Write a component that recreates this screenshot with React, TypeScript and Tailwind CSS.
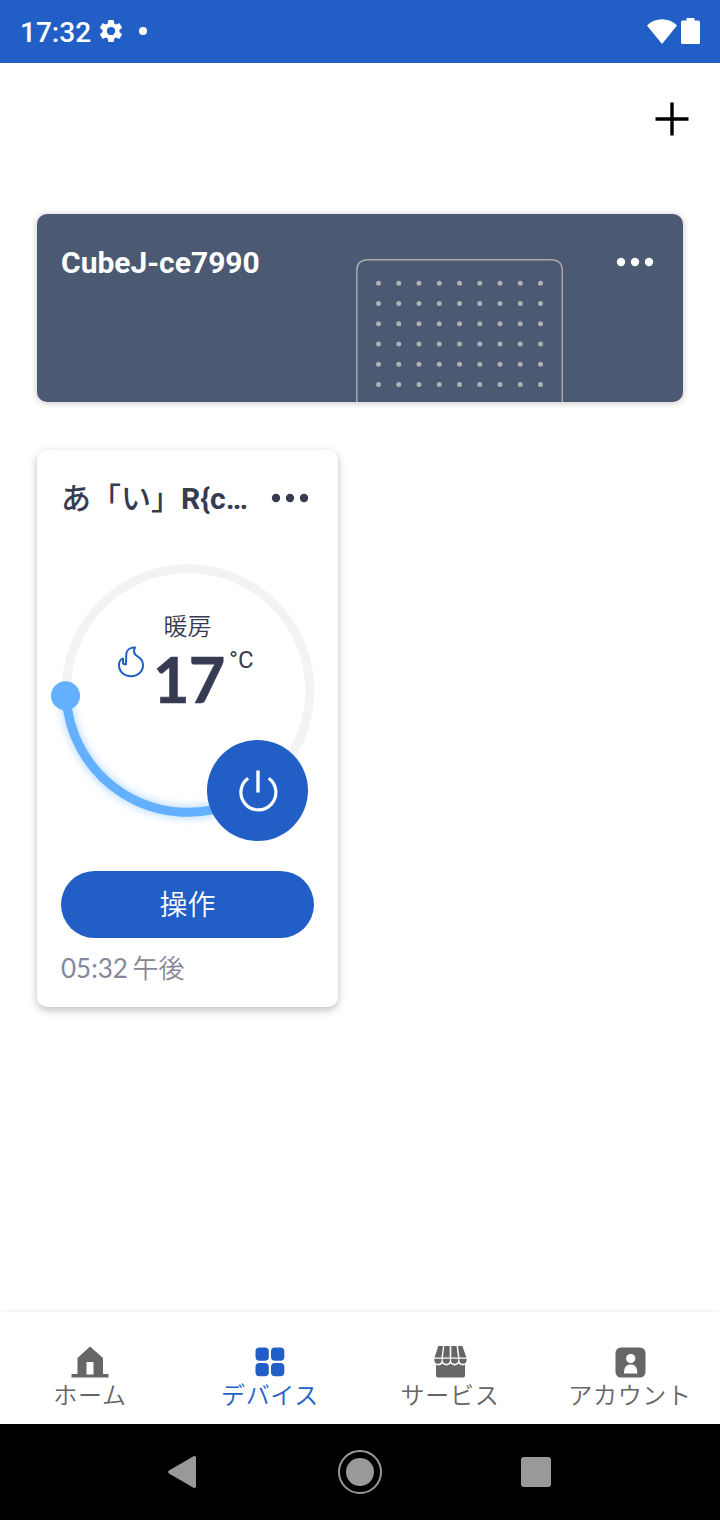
import type { ReactNode } from "react";

const FONT = "font-['Roboto','Noto_Sans_CJK_JP',sans-serif]";

function StatusBar() {
  return (
    <header className="flex h-[63px] shrink-0 items-center bg-[#215fc6] pl-[20px] pr-5 text-white">
      <span className="w-[80px] pt-px text-[28px] leading-[63px] font-medium">17:32</span>
      <svg className="h-[22px] w-[22px] mb-px" viewBox="2.3 2 19.4 20" preserveAspectRatio="none" fill="currentColor">
        <path d="M19.43 12.98c.04-.32.07-.64.07-.98s-.03-.66-.07-.98l2.11-1.65c.19-.15.24-.42.12-.64l-2-3.46c-.12-.22-.39-.3-.61-.22l-2.49 1c-.52-.4-1.08-.73-1.69-.98l-.38-2.65A.488.488 0 0 0 14 2h-4c-.25 0-.46.18-.49.42l-.38 2.65c-.61.25-1.17.59-1.69.98l-2.49-1c-.23-.09-.49 0-.61.22l-2 3.46c-.13.22-.07.49.12.64l2.11 1.65c-.04.32-.07.65-.07.98s.03.66.07.98l-2.11 1.65c-.19.15-.24.42-.12.64l2 3.46c.12.22.39.3.61.22l2.49-1c.52.4 1.08.73 1.69.98l.38 2.65c.03.24.24.42.49.42h4c.25 0 .46-.18.49-.42l.38-2.65c.61-.25 1.17-.59 1.69-.98l2.49 1c.23.09.49 0 .61-.22l2-3.46c.12-.22.07-.49-.12-.64l-2.11-1.65zM12 15.700a3.700 3.700 0 1 1 0-7.400 3.700 3.700 0 0 1 0 7.400z" />
      </svg>
      <span className="mb-px ml-[17px] size-2 rounded-full bg-white" />
      <svg className="mb-px ml-auto h-[25px] w-[30px]" viewBox="0 0 30 25" fill="currentColor">
        <path d="M15 25 0 6.500C8-2 22-2 30 6.500Z" />
      </svg>
      <svg className="mb-px ml-1 h-[26px] w-[19px]" viewBox="0 0 19 26" fill="currentColor">
        <path d="M5.500 0h8v2.500H17.500q1.500 0 1.500 1.500V24.500q0 1.500-1.500 1.500H1.500q-1.500 0-1.500-1.500V4q0-1.500 1.500-1.500h4Z" />
      </svg>
    </header>
  );
}

function MoreButton({ className }: { className: string }) {
  return (
    <button aria-label="メニュー" className={className}>
      <svg className="h-2.5 w-[38px]" viewBox="0 0 38 10" fill="currentColor">
        <circle cx="5" cy="5" r="4.200" />
        <circle cx="19" cy="5" r="4.200" />
        <circle cx="33" cy="5" r="4.200" />
      </svg>
    </button>
  );
}

const COLS = [0, 1, 2, 3, 4, 5, 6, 7, 8];
const ROWS = [0, 1, 2, 3, 4, 5];

function CubeCard() {
  return (
    <section className="flex h-[188px] items-start rounded-[10px] bg-[#4b5972] pl-6 shadow-[0_1px_7px_rgba(0,0,0,0.24)]">
      <h2 className="mt-[30px] w-[295px] text-[30px] leading-[38px] font-bold text-white">CubeJ-ce7990</h2>
      <svg className="mt-[45px] h-[143px] w-[208px]" viewBox="0 0 208 143" fill="none">
        <path d="M.8 143V12Q.8.8 12 .8H195Q206.300.8 206.300 12V143" stroke="#aaa" strokeWidth="1.500" />
        {ROWS.map((r) =>
          COLS.map((c) => <circle key={`${r}-${c}`} cx={22.5 + c * 20.25} cy={24.3 + r * 20.25} r="2.500" fill="#b0b0b0" />),
        )}
      </svg>
      <MoreButton className="mt-[43px] ml-[52px] flex text-white" />
    </section>
  );
}

function Dial() {
  return (
    <div className="relative h-[300px] w-[301px]">
      <svg className="block h-[300px] w-[301px]" viewBox="0 0 301 300" fill="none">
        <defs>
          <filter id="glow" x="-20%" y="-20%" width="140%" height="140%">
            <feGaussianBlur stdDeviation="5" />
          </filter>
        </defs>
        <circle cx="151" cy="140.500" r="121.800" stroke="#f3f3f3" strokeWidth="9" />
        <path d="M29.200 146A121.800 121.800 0 0 0 200 252" stroke="#62b0ff" strokeWidth="10" opacity=".55" filter="url(#glow)" />
        <path d="M29.200 146A121.800 121.800 0 0 0 200 252" stroke="#62b0ff" strokeWidth="9" />
        <circle cx="28.500" cy="145.800" r="14.500" fill="#62b0ff" />
        <circle cx="220.500" cy="240.500" r="50.500" fill="#215fc6" />
        <path d="M211.100 228.200A17.500 17.500 0 1 0 231.700 228.200" stroke="#fff" strokeWidth="3.200" />
        <path d="M221 220.500V242.500" stroke="#fff" strokeWidth="3.400" />
        <path
          d="M89 114.200H87.500Q86 114.200 86 112.500V108.500C83.800 109 82 112 82 115C82 121.500 87 126.300 94 126.300S106 121.500 106 115C106 111 104 108.500 101.200 106.800C98.500 105.200 97 103.500 97 101.500C97 99.500 97.400 98.800 98 97.500C93 97.300 89.500 100 89.300 104Z"
          stroke="#215fc6"
          strokeWidth="2"
          strokeLinejoin="round"
        />
      </svg>
      <div className="absolute top-[60px] left-[75px] w-[151px] text-center text-[24px] leading-[34px] font-[350] text-[#363b52]">
        暖房
      </div>
      <div className="absolute top-[94px] left-[116px] flex items-start text-[#363b52]">
        <span className="w-[76px] font-['Lato',sans-serif] text-[63px] leading-[69px] font-bold tracking-[-0.800px] [-webkit-text-stroke:0.600px_#363b52]">
          17
        </span>
        <span className="pt-px text-[24px] leading-[30px]">°C</span>
      </div>
    </div>
  );
}

function HeaterCard() {
  return (
    <section className="mt-12 flex h-[557px] w-[301px] flex-col rounded-[10px] bg-white shadow-[0_3px_8px_rgba(0,0,0,0.26)]">
      <div className="flex h-[100px] items-start pl-6">
        <h2 className="mt-[30px] w-[210px] text-[30px] leading-[38px] font-bold whitespace-nowrap text-[#363b52]">
          <span className="font-medium">あ「い」</span>R&#123;c…
        </h2>
        <MoreButton className="mt-[43px] flex text-[#363b52]" />
      </div>
      <Dial />
      <button className="mx-6 mt-[21px] h-[67px] rounded-full bg-[#215fc6] pt-0.5 text-[28px] leading-[65px] font-[350] text-white">
        操作
      </button>
      <p className="mt-[11px] ml-6 font-['Lato','Noto_Sans_CJK_JP',sans-serif] text-[26px] leading-[38px] text-[#85889a]">
        05:32<span className="font-[350] [word-spacing:-2.500px]"> 午後</span>
      </p>
    </section>
  );
}

function HomeIcon() {
  return (
    <svg className="h-8 w-[38px]" viewBox="0 0 38 32" fill="currentColor">
      <path fillRule="evenodd" d="M19 .5 32 12V28H37.500V31.500H.5V28H6.500V12ZM15.500 16V28.500H22.500V16Z" />
    </svg>
  );
}

function DevicesIcon() {
  return (
    <svg className="h-8 w-[38px]" viewBox="0 0 38 32" fill="currentColor">
      <rect x="4.500" y="1.500" width="13.300" height="13.300" rx="4" />
      <rect x="20" y="1.500" width="13.300" height="13.300" rx="4" />
      <rect x="4.500" y="17" width="13.300" height="13.300" rx="4" />
      <rect x="20" y="17" width="13.300" height="13.300" rx="4" />
    </svg>
  );
}

function ServiceIcon() {
  return (
    <svg className="h-8 w-[38px]" viewBox="0 0 38 32" fill="currentColor">
      <path d="M7.300 0H12L10.500 11.500H3.600ZM13.300 0H18.700V11.500H11.900ZM20.300 0H25.500L27 11.500H20.300ZM27 0H31.400L35.400 11.500H28.500Z" />
      <path d="M3.300 12.800H10.700V14A3.700 3.700 0 0 1 3.300 14ZM11.700 12.800H19V14A3.650 3.700 0 0 1 11.700 14ZM20 12.800H27.300V14A3.650 3.700 0 0 1 20 14ZM28.300 12.800H35.600V14A3.650 3.700 0 0 1 28.300 14Z" />
      <path d="M5 18.800Q8.800 20.500 11.200 17.500Q15.400 21.500 19.500 17.500Q23.500 21.500 27.800 17.500Q30.300 20.500 34 18.800V29.500Q34 31.500 32 31.500H7Q5 31.500 5 29.500Z" />
    </svg>
  );
}

function AccountIcon() {
  return (
    <svg className="h-8 w-[38px]" viewBox="0 0 38 32">
      <rect x="4.500" y="1.500" width="30" height="30" rx="5.500" fill="currentColor" />
      <circle cx="19.700" cy="12.500" r="4.600" fill="#fff" />
      <path d="M13 27.500C13 21 15.500 18.500 19.700 18.500S26.300 21 26.300 27.500Z" fill="#fff" />
    </svg>
  );
}

function Tab({ icon, label, active = false }: { icon: ReactNode; label: string; active?: boolean }) {
  return (
    <a className={active ? "flex flex-1 flex-col items-center text-[#215fc6]" : "flex flex-1 flex-col items-center text-[#666]"}>
      {icon}
      <span className="mt-px text-[24px] leading-[34px] font-[350] tracking-[0.700px] whitespace-nowrap">{label}</span>
    </a>
  );
}

export default function App() {
  return (
    <div className={`flex h-[1520px] w-[720px] flex-col overflow-hidden bg-white ${FONT}`}>
      <StatusBar />
      <div className="flex h-[151px] shrink-0 items-start justify-end pt-[39px] pr-[31px]">
        <svg className="size-[34px]" viewBox="0 0 34 34" stroke="#000" strokeWidth="3.400">
          <path d="M.5 17H33.500M17 .5V33.500" />
        </svg>
      </div>
      <main className="flex-1 px-[37px]">
        <CubeCard />
        <HeaterCard />
      </main>
      <nav className="flex h-[112px] shrink-0 bg-white pt-[34px] shadow-[0_0_4px_rgba(0,0,0,0.1)]">
        <Tab icon={<HomeIcon />} label="ホーム" />
        <Tab icon={<DevicesIcon />} label="デバイス" active />
        <Tab icon={<ServiceIcon />} label="サービス" />
        <Tab icon={<AccountIcon />} label="アカウント" />
      </nav>
      <footer className="flex h-24 shrink-0 items-center bg-black pr-[169px] pl-[168px]">
        <svg className="h-8 w-7" viewBox="0 0 28 32" fill="#999">
          <path d="M1 14.500 25.500.3Q28-.5 28 2V30Q28 32.500 25.500 31.700L1 17.500Q-.8 16 1 14.500Z" />
        </svg>
        <svg className="ml-[142px] size-11" viewBox="0 0 44 44">
          <circle cx="22" cy="22" r="21" fill="none" stroke="#999" strokeWidth="2" />
          <circle cx="22" cy="22" r="14" fill="#999" />
        </svg>
        <span className="ml-auto size-[30px] rounded-[3px] bg-[#999]" />
      </footer>
    </div>
  );
}
